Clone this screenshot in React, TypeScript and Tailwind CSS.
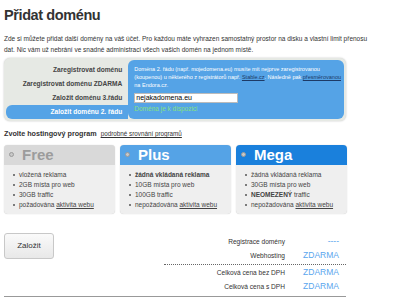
import React from "react";

const font = { fontFamily: '"Liberation Sans", Arial, sans-serif' };

function Card({ name, headerCls, nameCls, items }: { name: string; headerCls: string; nameCls: string; items: React.ReactNode[] }) {
  return (
    <div className="flex flex-col w-[111px] rounded-[4px] bg-[#efefef] overflow-hidden shadow-[0_0_1px_rgba(0,0,0,0.25)]">
      <div className={`h-[20px] flex items-center ${headerCls}`}>
        <span className="w-[5px] h-[5px] rounded-full bg-[#c8c8c8] ml-[5px] mr-[8px] border border-[#9a9a9a]" />
        <span className={`text-[15px] font-bold leading-none ${nameCls}`}>{name}</span>
      </div>
      <ul className="pt-[5px] pb-[4px] pl-[9px] text-[6.5px] text-[#444] leading-[10px]">
        {items.map((it, i) => (
          <li key={i} className="flex items-center">
            <span className="w-[2px] h-[2px] bg-[#555] rounded-full mr-[4px]" />
            <span>{it}</span>
          </li>
        ))}
      </ul>
    </div>
  );
}

function Row({ label, value }: { label: string; value: string }) {
  return (
    <div className="flex items-center h-[14px]">
      <span className="text-right">{label}</span>
      <span className="w-[61px] text-right text-[#5aa6ee] text-[8.5px] pr-[7px]">{value}</span>
    </div>
  );
}

export default function App() {
  return (
    <div className="w-[400px] h-[307px] bg-white text-[#333] overflow-hidden" style={font}>
      <div className="px-[4px] pt-[5px]">
        <h1 className="text-[14.5px] font-bold leading-[20px] tracking-[-0.4px] text-[#333]">Přidat doménu</h1>
        <p className="mt-[8px] text-[6.5px] leading-[11px] text-[#333] whitespace-nowrap">
          Zde si můžete přidat další domény na váš účet. Pro každou máte vyhrazen samostatný prostor na disku a vlastní limit přenosu<br />
          dat. Nic vám už nebrání ve snadné administraci všech vašich domén na jednom místě.
        </p>

        <div className="mt-[3px] w-[342px] flex rounded-[6px] bg-[#e6e9e4] p-[2px] shadow-[0_0_2px_rgba(0,0,0,0.25)]">
          <div className="w-[124px] flex flex-col pt-[3px] text-[6.6px] font-bold text-[#444]">
            <div className="h-[14px] flex items-center justify-end pr-[6px]">Zaregistrovat doménu</div>
            <div className="h-[14px] flex items-center justify-end pr-[6px]">Zaregistrovat doménu ZDARMA</div>
            <div className="h-[14px] flex items-center justify-end pr-[6px]">Založit doménu 3.řádu</div>
            <div className="h-[14px] flex items-center justify-end pr-[6px] bg-[#55a3e6] text-white rounded-l-[6px]">Založit doménu 2. řádu</div>
          </div>
          <div className="flex-1 rounded-[6px] bg-[#55a3e6] pl-[6px] pr-[3px] pt-[5px] pb-[4px] text-white">
            <p className="text-[5.5px] leading-[8px] whitespace-nowrap">
              Doména 2. řádu (např. mojedomena.eu) musíte mít nejprve zaregistrovanou<br />
              (koupenou) u některého z registrátorů např. <span className="underline text-[#1d3a66]">Stable.cz</span>. Následně pak <span className="underline text-[#1d3a66]">přesměrovanou</span><br />
              na Endora.cz.
            </p>
            <div className="mt-[4px] w-[104px] h-[10px] bg-white border border-[#bbb] text-black text-[7px] leading-[8px] pl-[1px]">nejakadomena.eu</div>
            <div className="mt-[1px] text-[6.5px] leading-[9px] text-[#86e07e]">Doména je k dispozici</div>
          </div>
        </div>

        <div className="mt-[8px] flex items-baseline">
          <span className="text-[7.2px] font-bold text-[#333]">Zvolte hostingový program</span>
          <span className="ml-[4px] text-[6.3px] underline text-[#333]">podrobné srovnání programů</span>
        </div>

        <div className="mt-[5px] flex gap-[5px]">
          <Card
            name="Free"
            headerCls="bg-[#d9d9d9]"
            nameCls="text-[#9c9c9c]"
            items={["vložená reklama", "2GB místa pro web", "30GB traffic", <>požadována <span className="underline">aktivita webu</span></>]}
          />
          <Card
            name="Plus"
            headerCls="bg-[#55a3e6]"
            nameCls="text-white"
            items={[<b>žádná vkládaná reklama</b>, "10GB místa pro web", "100GB traffic", <>nepožadována <span className="underline">aktivita webu</span></>]}
          />
          <Card
            name="Mega"
            headerCls="bg-[#1a80dc]"
            nameCls="text-white"
            items={["žádná vkládaná reklama", "30GB místa pro web", <><b>NEOMEZENÝ</b> traffic</>, <>nepožadována <span className="underline">aktivita webu</span></>]}
          />
        </div>

        <div className="mt-[17px] flex w-[342px]">
          <div>
            <button className="w-[50px] h-[26px] rounded-[3px] border border-[#c8c8c8] bg-gradient-to-b from-[#fafafa] to-[#e8e8e8] text-[8px] text-[#333]">Založit</button>
          </div>
          <div className="flex-1 flex flex-col items-end pt-[4px] text-[6.6px] text-[#333]">
            <Row label="Registrace domény" value="----" />
            <Row label="Webhosting" value="ZDARMA" />
            <div className="w-[182px] border-t border-dotted border-[#666] my-[1px]" />
            <Row label="Celková cena bez DPH" value="ZDARMA" />
            <Row label="Celková cena s DPH" value="ZDARMA" />
          </div>
        </div>
        <div className="w-[342px] border-t border-[#999] mt-[2px]" />
      </div>
    </div>
  );
}
